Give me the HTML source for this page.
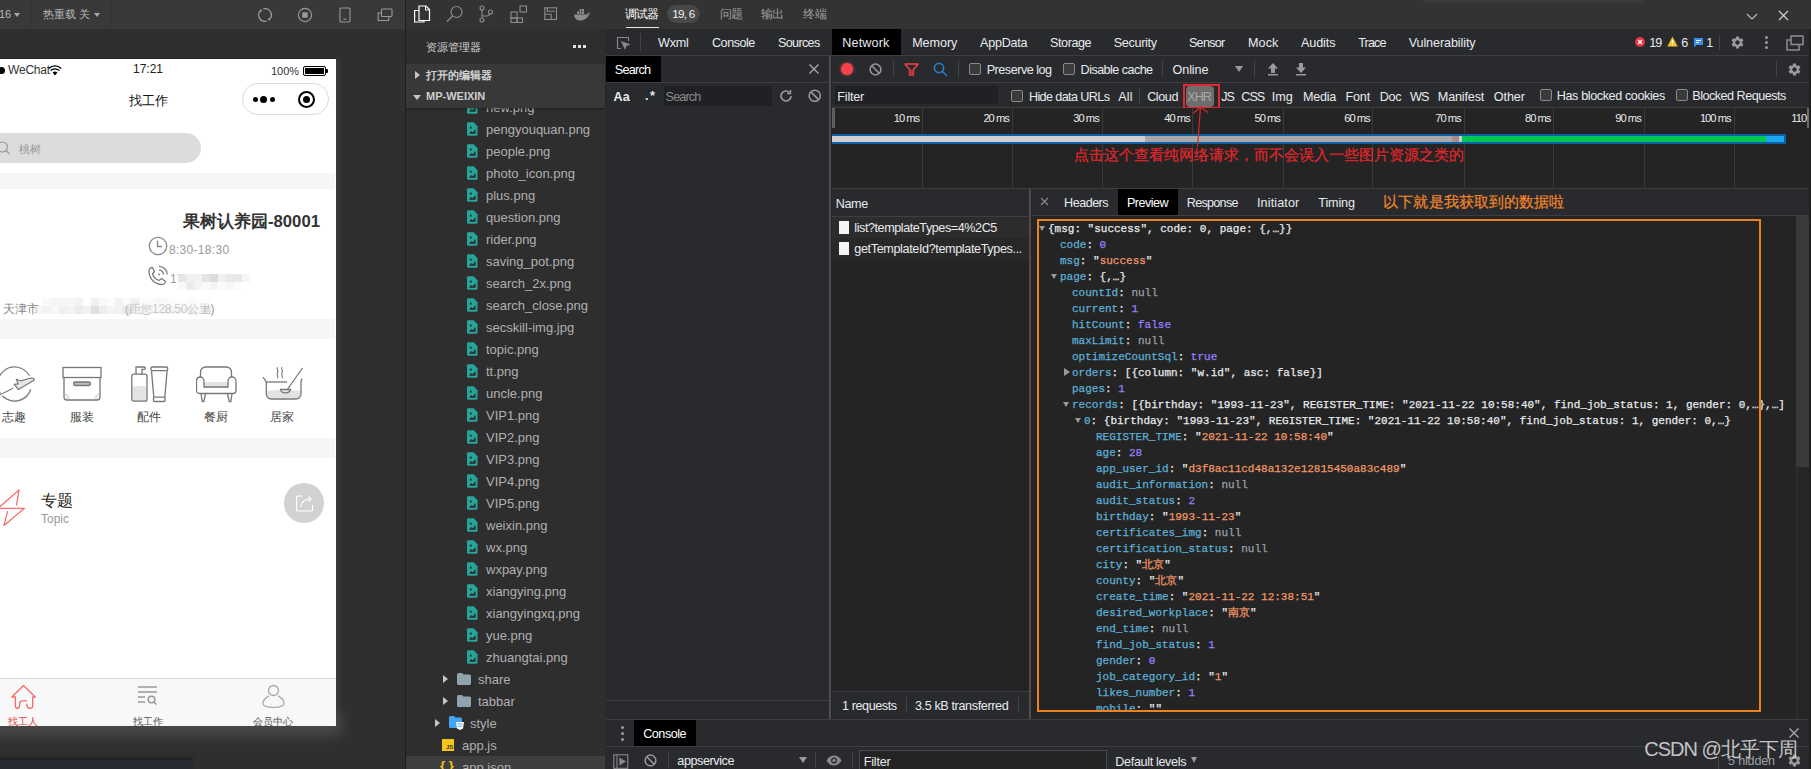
<!DOCTYPE html>
<html><head><meta charset="utf-8">
<style>
*{margin:0;padding:0;box-sizing:border-box}
html,body{width:1811px;height:769px;overflow:hidden;background:#2d2d2d;font-family:"Liberation Sans",sans-serif;font-size:12px;color:#ccc}
.a{position:absolute;white-space:nowrap}
.mono{font-family:"Liberation Mono",monospace}
</style></head><body>
<!-- ========== SIMULATOR ========== -->
<div class="a" style="left:0;top:0;width:405px;height:769px;background:#2f2f2f;overflow:hidden">
  <div class="a" style="left:0;top:0;width:405px;height:29px;background:#393939"></div>
  <div class="a" style="left:31px;top:0;width:1px;height:29px;background:#333"></div>
  <div class="a" style="left:111px;top:0;width:1px;height:29px;background:#333"></div>
  <div class="a" style="left:-1px;top:8px;font-size:11px;color:#b8b8b8;line-height:13px">16</div>
  <div class="a" style="left:14px;top:13px;width:0;height:0;border-left:3px solid transparent;border-right:3px solid transparent;border-top:4px solid #aaa"></div>
  <div class="a" style="left:43px;top:7px;font-size:11.3px;color:#b8b8b8;line-height:14px">热重载 关</div>
  <div class="a" style="left:94px;top:13px;width:0;height:0;border-left:3px solid transparent;border-right:3px solid transparent;border-top:4px solid #aaa"></div>
  <svg class="a" style="left:257px;top:7px" width="16" height="16" viewBox="0 0 16 16" fill="none" stroke="#9a9a9a" stroke-width="1.3"><path d="M6.4 1.9A6.3 6.3 0 0 1 12.05 12.83"/><path d="M9.6 14.1A6.3 6.3 0 0 1 3.95 3.17"/><path d="M10.3 12.2l2.3 1.9.4-3z" fill="#9a9a9a" stroke="none"/><path d="M5.7 3.8l-2.3-1.9-.4 3z" fill="#9a9a9a" stroke="none"/></svg>
  <svg class="a" style="left:297px;top:7px" width="16" height="16" viewBox="0 0 16 16"><circle cx="8" cy="8" r="6.6" fill="none" stroke="#9a9a9a" stroke-width="1.1"/><rect x="5.3" y="5.3" width="5.4" height="5.4" fill="#9a9a9a"/></svg>
  <svg class="a" style="left:339px;top:7px" width="12" height="16" viewBox="0 0 12 16" fill="none" stroke="#9a9a9a" stroke-width="1.1"><rect x="1" y="1" width="10" height="14" rx="1.2"/><path d="M4.5 12.2h3"/></svg>
  <svg class="a" style="left:377px;top:8px" width="16" height="14" viewBox="0 0 16 14" fill="none" stroke="#9a9a9a" stroke-width="1.1"><rect x="4.5" y="1" width="10.5" height="7.5" rx=".8"/><path d="M4.5 5H1.2v7.5h10.5V8.5"/></svg>

  <!-- phone glow -->
  <div class="a" style="left:334px;top:58px;width:6px;height:668px;background:#383838;filter:blur(1px)"></div>
  <div class="a" style="left:-20px;top:712px;width:362px;height:24px;background:#484848;filter:blur(6px)"></div>
  <!-- phone -->
  <div class="a" style="left:0;top:58px;width:336px;height:668px;background:#fff;overflow:hidden">
    <div class="a" style="left:0;top:0;width:336px;height:1px;background:#262626"></div>
    <!-- status bar -->
    <div class="a" style="left:-2px;top:9px;width:7px;height:7px;border-radius:50%;background:#000"></div>
    <div class="a" style="left:8px;top:5px;font-size:12px;color:#333;line-height:15px;letter-spacing:-.2px">WeChat</div>
    <svg class="a" style="left:48px;top:7px" width="14" height="11" viewBox="0 0 14 11"><path d="M7 10.5L4.6 7.6a3.6 3.6 0 0 1 4.8 0z" fill="#000"/><path d="M2.6 5.6a6.4 6.4 0 0 1 8.8 0M0.8 3.4a9 9 0 0 1 12.4 0" fill="none" stroke="#000" stroke-width="1.4"/></svg>
    <div class="a" style="left:133px;top:4px;font-size:12px;color:#222;line-height:15px">17:21</div>
    <div class="a" style="left:271px;top:6px;font-size:11px;color:#333;line-height:14px">100%</div>
    <div class="a" style="left:303px;top:8px;width:23px;height:10px;border:1.5px solid #000;border-radius:2px;padding:1px"><div style="width:100%;height:100%;background:#000"></div></div>
    <div class="a" style="left:326px;top:11px;width:2px;height:4px;background:#000;border-radius:0 1px 1px 0"></div>
    <!-- nav -->
    <div class="a" style="left:128.5px;top:34px;font-size:13px;color:#111;line-height:17px">找工作</div>
    <div class="a" style="left:242px;top:25px;width:87px;height:32px;border:1px solid #dcdcdc;border-radius:16px;background:#fff"></div>
    <div class="a" style="left:253px;top:39px;width:5px;height:5px;border-radius:50%;background:#000"></div>
    <div class="a" style="left:260px;top:38px;width:7px;height:7px;border-radius:50%;background:#000"></div>
    <div class="a" style="left:270px;top:39px;width:5px;height:5px;border-radius:50%;background:#000"></div>
    <div class="a" style="left:298px;top:33px;width:17px;height:17px;border-radius:50%;border:2px solid #000"></div>
    <div class="a" style="left:303px;top:38px;width:7px;height:7px;border-radius:50%;background:#000"></div>
    <!-- search -->
    <div class="a" style="left:-20px;top:75px;width:221px;height:30px;border-radius:15px;background:#dcdcdc"></div>
    <svg class="a" style="left:-3px;top:83px" width="16" height="15" viewBox="0 0 16 15" fill="none" stroke="#999" stroke-width="1.2"><circle cx="5.5" cy="6" r="5"/><path d="M9 9.5l3.5 3.5"/></svg>
    <div class="a" style="left:19px;top:84px;font-size:11px;color:#999;line-height:14px">桃树</div>
    <!-- band -->
    <div class="a" style="left:0;top:115px;width:335px;height:16px;background:#f6f6f6"></div>
    <!-- card -->
    <div class="a" style="left:183px;top:154px;font-size:16.7px;font-weight:bold;color:#333;line-height:20px">果树认养园-80001</div>
    <svg class="a" style="left:148px;top:178px" width="20" height="20" viewBox="0 0 20 20" fill="none" stroke="#888" stroke-width="1.3"><circle cx="10" cy="10" r="8.7"/><path d="M9.5 4.5v6h4.5"/></svg>
    <div class="a" style="left:169px;top:184.5px;font-size:12px;color:#999;line-height:15px;letter-spacing:.3px">8:30-18:30</div>
    <svg class="a" style="left:148px;top:207px" width="21" height="21" viewBox="0 0 21 21" fill="none" stroke="#7a7a7a" stroke-width="1.3" stroke-linejoin="round"><path d="M4.5 2.5C2.5 2.5 1 4 1 6 1 13.5 6.5 19.5 14 19.5c2 0 3.5-1.5 3.5-3L13.5 13.5 11 15.5C8 14.5 5.5 12 4.5 9L6.5 6.5z"/><path d="M11 1.3A8.2 8.2 0 0 1 19.2 9.5"/><path d="M11 5A4.5 4.5 0 0 1 15.5 9.5"/><circle cx="11" cy="9.5" r=".9" fill="#7a7a7a" stroke="none"/></svg>
    <div class="a" style="left:170px;top:214px;font-size:12px;color:#999;line-height:15px">17</div>
    <div class="a" style="left:178px;top:216px;width:8px;height:8px;background:#e6e6e6"></div>
    <div class="a" style="left:186px;top:216px;width:8px;height:8px;background:#f0f0f0"></div>
    <div class="a" style="left:194px;top:216px;width:8px;height:8px;background:#f2f2f2"></div>
    <div class="a" style="left:202px;top:216px;width:8px;height:8px;background:#e4e4e4"></div>
    <div class="a" style="left:210px;top:216px;width:8px;height:8px;background:#dcdcdc"></div>
    <div class="a" style="left:218px;top:216px;width:8px;height:8px;background:#f1f1f1"></div>
    <div class="a" style="left:226px;top:216px;width:8px;height:8px;background:#eaeaea"></div>
    <div class="a" style="left:234px;top:216px;width:8px;height:8px;background:#e8e8e8"></div>
    <div class="a" style="left:242px;top:216px;width:8px;height:8px;background:#f6f6f6"></div>
    <div class="a" style="left:178px;top:224px;width:8px;height:8px;background:#f8f8f8"></div>
    <div class="a" style="left:186px;top:224px;width:8px;height:8px;background:#ececec"></div>
    <div class="a" style="left:194px;top:224px;width:8px;height:8px;background:#f5f5f5"></div>
    <div class="a" style="left:202px;top:224px;width:8px;height:8px;background:#fafafa"></div>
    <div class="a" style="left:210px;top:224px;width:8px;height:8px;background:#f4f4f4"></div>
    <div class="a" style="left:218px;top:224px;width:8px;height:8px;background:#fbfbfb"></div>
    <div class="a" style="left:226px;top:224px;width:8px;height:8px;background:#f7f7f7"></div>
    <div class="a" style="left:234px;top:224px;width:8px;height:8px;background:#fcfcfc"></div>
    <div class="a" style="left:3px;top:244px;font-size:12px;color:#888;line-height:15px">天津市</div>
    <div class="a" style="left:125px;top:244px;font-size:12px;color:#999;line-height:15px;letter-spacing:-.3px">(距您128.50公里)</div>
    <div class="a" style="left:0;top:0;opacity:.55"><div class="a" style="left:43px;top:240px;width:8px;height:8px;background:#f5f5f5"></div>
    <div class="a" style="left:51px;top:240px;width:8px;height:8px;background:#eeeeee"></div>
    <div class="a" style="left:59px;top:240px;width:8px;height:8px;background:#f0f0f0"></div>
    <div class="a" style="left:67px;top:240px;width:8px;height:8px;background:#f2f2f2"></div>
    <div class="a" style="left:75px;top:240px;width:8px;height:8px;background:#e8e8e8"></div>
    <div class="a" style="left:91px;top:240px;width:8px;height:8px;background:#e6e6e6"></div>
    <div class="a" style="left:99px;top:240px;width:8px;height:8px;background:#f4f4f4"></div>
    <div class="a" style="left:107px;top:240px;width:8px;height:8px;background:#fafafa"></div>
    <div class="a" style="left:115px;top:240px;width:8px;height:8px;background:#e9e9e9"></div>
    <div class="a" style="left:123px;top:240px;width:8px;height:8px;background:#f6f6f6"></div>
    <div class="a" style="left:131px;top:240px;width:8px;height:8px;background:#e5e5e5"></div>
    <div class="a" style="left:139px;top:240px;width:8px;height:8px;background:#fbfbfb"></div>
    <div class="a" style="left:147px;top:240px;width:8px;height:8px;background:#f9f9f9"></div>
    <div class="a" style="left:155px;top:240px;width:8px;height:8px;background:#f3f3f3"></div>
    <div class="a" style="left:163px;top:240px;width:8px;height:8px;background:#f7f7f7"></div>
    <div class="a" style="left:171px;top:240px;width:8px;height:8px;background:#fafafa"></div>
    <div class="a" style="left:179px;top:240px;width:8px;height:8px;background:#fcfcfc"></div>
    <div class="a" style="left:187px;top:240px;width:8px;height:8px;background:#f8f8f8"></div>
    <div class="a" style="left:195px;top:240px;width:8px;height:8px;background:#fafafa"></div>
    <div class="a" style="left:203px;top:240px;width:8px;height:8px;background:#fbfbfb"></div>
    <div class="a" style="left:35px;top:248px;width:8px;height:8px;background:#f0f0f0"></div>
    <div class="a" style="left:43px;top:248px;width:8px;height:8px;background:#e8e8e8"></div>
    <div class="a" style="left:51px;top:248px;width:8px;height:8px;background:#f2f2f2"></div>
    <div class="a" style="left:59px;top:248px;width:8px;height:8px;background:#e4e4e4"></div>
    <div class="a" style="left:67px;top:248px;width:8px;height:8px;background:#ececec"></div>
    <div class="a" style="left:75px;top:248px;width:8px;height:8px;background:#dcdcdc"></div>
    <div class="a" style="left:83px;top:248px;width:8px;height:8px;background:#e6e6e6"></div>
    <div class="a" style="left:91px;top:248px;width:8px;height:8px;background:#c8c8c8"></div>
    <div class="a" style="left:99px;top:248px;width:8px;height:8px;background:#e2e2e2"></div>
    <div class="a" style="left:107px;top:248px;width:8px;height:8px;background:#eeeeee"></div>
    <div class="a" style="left:115px;top:248px;width:8px;height:8px;background:#e8e8e8"></div>
    <div class="a" style="left:123px;top:248px;width:8px;height:8px;background:#d4d4d4"></div>
    <div class="a" style="left:131px;top:248px;width:8px;height:8px;background:#e8e8e8"></div>
    <div class="a" style="left:139px;top:248px;width:8px;height:8px;background:#eeeeee"></div>
    <div class="a" style="left:147px;top:248px;width:8px;height:8px;background:#ececec"></div>
    <div class="a" style="left:155px;top:248px;width:8px;height:8px;background:#f2f2f2"></div>
    <div class="a" style="left:163px;top:248px;width:8px;height:8px;background:#eaeaea"></div>
    <div class="a" style="left:171px;top:248px;width:8px;height:8px;background:#ececec"></div>
    <div class="a" style="left:179px;top:248px;width:8px;height:8px;background:#eeeeee"></div>
    <div class="a" style="left:187px;top:248px;width:8px;height:8px;background:#e8e8e8"></div>
    <div class="a" style="left:195px;top:248px;width:8px;height:8px;background:#f0f0f0"></div>
    <div class="a" style="left:203px;top:248px;width:8px;height:8px;background:#d8d8d8"></div></div>
    <!-- band 2 -->
    <div class="a" style="left:0;top:261px;width:335px;height:20px;background:#f6f6f6"></div>
    <!-- categories -->
    <svg class="a" style="left:-2px;top:308px" width="40" height="38" viewBox="0 0 40 38" fill="none" stroke="#777" stroke-width="1.2"><path d="M3 28A17 17 0 0 0 32.7 23.5" stroke="#ccc" stroke-width="2.5" opacity=".35"/><path d="M31.5 9.8A17 17 0 1 0 32.7 23.5"/><path d="M2 29.5L15.5 22.5" stroke="#fff" stroke-width="3"/><path d="M2 28.8L15 22.2"/><path d="M18.3 13.2L22.5 14.8 33 12Q36.5 12.2 36.3 14L20.5 23.6 16.2 18.3 20.2 17.8Z" fill="#e6e6e6" stroke-linejoin="round"/></svg>
    <svg class="a" style="left:62px;top:308px" width="40" height="36" viewBox="0 0 40 36" fill="none" stroke="#777" stroke-width="1.3"><path d="M3 28c2 1 3 3 3.5 5M37 28c-2 1-3 3-3.5 5" stroke="#e3e3e3" stroke-width="3"/><rect x="1" y="1.5" width="38" height="10"/><path d="M2 11.5v19.5a3 3 0 0 0 3 3h30a3 3 0 0 0 3-3V11.5"/><rect x="11.5" y="16" width="17" height="3.5" rx="1.75" fill="#bbb"/></svg>
    <svg class="a" style="left:131px;top:308px" width="38" height="37" viewBox="0 0 38 37" fill="none" stroke="#777" stroke-width="1.3"><path d="M1.4 20.5q7 -1.5 13.8 0V33.5a1.5 1.5 0 0 1-1.5 1.5H2.9a1.5 1.5 0 0 1-1.5-1.5z" fill="#e4e4e4" stroke="none"/><path d="M5 8.2V1h8.2a1.2 1.2 0 0 1 0 2.4H11v4.8"/><rect x=".8" y="8.2" width="15.2" height="27" rx="2"/><rect x="20" y="1" width="16.6" height="3.6" rx="1"/><path d="M20.5 4.6L22.8 31.2M36.1 4.6L33.8 31.2"/><rect x="22.5" y="31.2" width="11.6" height="4.3" rx="1"/></svg>
    <svg class="a" style="left:196px;top:308px" width="41" height="37" viewBox="0 0 41 37" fill="none" stroke="#777" stroke-width="1.3"><path d="M8 16.5q12 -1.5 24 0V21H8z" fill="#e2e2e2" stroke="none"/><path d="M4.5 11V6a5 5 0 0 1 5-5h21a5 5 0 0 1 5 5v5"/><path d="M4 11a4 4 0 0 1 4 4v6h24v-6a4 4 0 0 1 8 0v9.5a3 3 0 0 1-3 3H3.5a3 3 0 0 1-3-3V15A4 4 0 0 1 4 11z"/><path d="M5 27.5l1.2 8h1.6L9.5 27.5M31.5 27.5l1.7 8h1.6l1.2-8"/></svg>
    <svg class="a" style="left:262px;top:308px" width="42" height="37" viewBox="0 0 42 37" fill="none" stroke="#777" stroke-width="1.3"><path d="M4.5 25q17 -2 34 0V28a4.5 4.5 0 0 1-4.5 4.5H9A4.5 4.5 0 0 1 4.5 28z" fill="#e2e2e2" stroke="none"/><path d="M15.5 1.2c-1.5 1.5 1.5 3.5 0 5.5s1.5 3.5 0 5.5M20 1.2c-1.5 1.5 1.5 3.5 0 5.5s1.5 3.5 0 5.5" stroke-width="1.1"/><path d="M1 11l3.3 5V28a5 5 0 0 0 5 5H34a5 5 0 0 0 5-5V15.5l1-3"/><path d="M4.3 16H25"/><path d="M40.5 2L25 24"/><path d="M18.5 23.5h10a5 3.3 0 0 1-10 0z" fill="#e8e8e8"/></svg>
    <div class="a" style="left:2px;top:352px;font-size:12px;color:#444;line-height:14px">志趣</div>
    <div class="a" style="left:70px;top:352px;font-size:12px;color:#444;line-height:14px">服装</div>
    <div class="a" style="left:137px;top:352px;font-size:12px;color:#444;line-height:14px">配件</div>
    <div class="a" style="left:204px;top:352px;font-size:12px;color:#444;line-height:14px">餐厨</div>
    <div class="a" style="left:270px;top:352px;font-size:12px;color:#444;line-height:14px">居家</div>
    <!-- band 3 -->
    <div class="a" style="left:0;top:380px;width:335px;height:20px;background:#f6f6f6"></div>
    <!-- topic -->
    <svg class="a" style="left:-2px;top:430px" width="30" height="40" viewBox="0 0 30 40" fill="none" stroke="#f46e6e" stroke-width="1.3" stroke-linejoin="round" stroke-linecap="round"><path d="M18.5 17L21 2 0 20.3H26.5L6 37.4 9.5 23.6"/></svg>
    <div class="a" style="left:41px;top:433px;font-size:16px;color:#222;line-height:19px">专题</div>
    <div class="a" style="left:41px;top:454px;font-size:12px;color:#999;line-height:15px">Topic</div>
    <div class="a" style="left:284px;top:425px;width:40px;height:40px;border-radius:50%;background:#d2d2d2"></div>
    <svg class="a" style="left:295px;top:435px" width="19" height="19" viewBox="0 0 19 19" fill="none" stroke="#fff" stroke-width="1.2"><path d="M7 3H2.5a1 1 0 0 0-1 1v13a1 1 0 0 0 1 1h14a1 1 0 0 0 1-1v-5"/><path d="M5.5 14c1-5 5-8 10-8"/><path d="M13.5 3.5l2.5 2.5-2.5 2.5"/></svg>
    <!-- tabbar -->
    <div class="a" style="left:0;top:620px;width:336px;height:48px;background:#f8f8f8;border-top:1px solid #d6d6d6"></div>
    <svg class="a" style="left:11px;top:626px" width="26" height="26" viewBox="0 0 26 26" fill="none" stroke="#f26a6a" stroke-width="1.3" stroke-linejoin="round" stroke-linecap="round"><path d="M15.5 16.8H11.6C9.8 16.8 8.6 18 8.6 19.8V21.3C8.6 23.2 7.5 24.3 6.3 24.3S4.4 23.4 4.4 21.8V13H.9L12.5 1.5 24.2 13h-2.5v8.8c0 1.6-.8 2.5-2.4 2.5-2 0-3.6-1.4-3.6-4.1"/></svg>
    <svg class="a" style="left:137px;top:627px" width="21" height="22" viewBox="0 0 21 22" fill="none" stroke="#999" stroke-width="1.6"><path d="M1 2h19M1 7h19M1 12h7M1 17h7"/><circle cx="14.5" cy="14.5" r="3.3"/><path d="M16.8 17l2.5 2.5"/></svg>
    <svg class="a" style="left:261px;top:626px" width="25" height="25" viewBox="0 0 25 25" fill="none" stroke="#aaa" stroke-width="1.3"><circle cx="12.5" cy="6.5" r="5"/><path d="M8 11.8C4.5 13.5 2 16.5 2 19.5c0 2.5 4 3.8 10.5 3.8S23 22 23 19.5c0-3-2.5-6-6-7.7"/></svg>
    <div class="a" style="left:8px;top:657px;font-size:10.3px;color:#e64340;line-height:14px">找工人</div>
    <div class="a" style="left:133px;top:657px;font-size:10.3px;color:#555;line-height:14px">找工作</div>
    <div class="a" style="left:253px;top:657px;font-size:10.3px;color:#555;line-height:14px">会员中心</div>
  </div>
  <!-- shadow below phone -->
  
  <div class="a" style="left:0;top:760px;width:192px;height:9px;background:#262a33;box-shadow:0 -2px 4px rgba(0,0,0,.4)"></div>
</div>
<div class="a" style="left:405px;top:0;width:1px;height:769px;background:#1e1e1e"></div>
<!-- ========== EXPLORER ========== -->
<div class="a" style="left:406px;top:0;width:200px;height:769px;background:#2e2e2e;overflow:hidden">
  <div class="a" style="left:199px;top:29px;width:1px;height:740px;background:#2a2a2a"></div>
  <div class="a" style="left:0;top:0;width:200px;height:29px;background:#333"></div>
  <svg class="a" style="left:7px;top:5px" width="18" height="19" viewBox="0 0 18 19" fill="none" stroke="#fff" stroke-width="1.2"><path d="M6 5.5H1.6v11.5h9.4v-1.5"/><path d="M6 1h7l3.5 3.5v11H6z"/><path d="M12.5 1v4h4" stroke-width="1"/></svg>
  <svg class="a" style="left:40px;top:5px" width="18" height="18" viewBox="0 0 18 18" fill="none" stroke="#8c8c8c" stroke-width="1.2"><circle cx="10.5" cy="7" r="5.5"/><path d="M6.5 11L1 16.5"/></svg>
  <svg class="a" style="left:73px;top:5px" width="15" height="18" viewBox="0 0 15 18" fill="none" stroke="#8c8c8c" stroke-width="1.1"><circle cx="3" cy="3" r="2"/><circle cx="3" cy="15" r="2"/><circle cx="11.5" cy="7" r="2"/><path d="M3 5v8M3 11h5.5l3-2"/></svg>
  <svg class="a" style="left:104px;top:5px" width="18" height="18" viewBox="0 0 18 18" fill="none" stroke="#8c8c8c" stroke-width="1.1"><rect x="1" y="7" width="6" height="6"/><rect x="1" y="13" width="6" height="4.5"/><rect x="7" y="13" width="5.5" height="4.5"/><rect x="10" y="1" width="6.5" height="6"/></svg>
  <svg class="a" style="left:138px;top:7px" width="14" height="14" viewBox="0 0 14 14" fill="none" stroke="#8c8c8c" stroke-width="1.1"><rect x=".8" y=".8" width="11.7" height="11.7"/><path d="M3.3 1v3.2h7.4M1 7.3h6.2v5"/></svg>
  <svg class="a" style="left:167px;top:8px" width="18" height="13" viewBox="0 0 18 13"><path d="M1 6.5h13c1-1.5 2.5-2 3.5-1.5-1 .5-1.5 1.5-2 2.5C14 11 10.5 12.5 7 12.5 3.5 12.5 1.5 10.5 1 6.5z" fill="#8c8c8c"/><rect x="4" y="3.5" width="2" height="2.5" fill="#8c8c8c"/><rect x="6.5" y="3.5" width="2" height="2.5" fill="#8c8c8c"/><rect x="9" y="3.5" width="2" height="2.5" fill="#8c8c8c"/><rect x="6.5" y="1" width="2" height="2.3" fill="#8c8c8c"/><rect x="9" y="1" width="2" height="2.3" fill="#8c8c8c"/></svg>
  <div class="a" style="left:20px;top:39.5px;font-size:11.2px;color:#d0d0d0;line-height:15px">资源管理器</div>
  
  
  

  <svg class="a" style="left:61px;top:100px" width="10.5" height="14" viewBox="0 0 11 14"><path d="M0 1a1 1 0 0 1 1-1h6l4 4v9a1 1 0 0 1-1 1H1a1 1 0 0 1-1-1z" fill="#26a69a"/><path d="M2 12l2.5-3 1.5 1.5L9 7v5z" fill="#2d2d2d"/><circle cx="4" cy="5.5" r="1.2" fill="#2d2d2d"/></svg>
  <div class="a" style="left:80px;top:100px;font-size:13px;color:#b0b0b0;line-height:16px">new.png</div>
  <svg class="a" style="left:61px;top:122px" width="10.5" height="14" viewBox="0 0 11 14"><path d="M0 1a1 1 0 0 1 1-1h6l4 4v9a1 1 0 0 1-1 1H1a1 1 0 0 1-1-1z" fill="#26a69a"/><path d="M2 12l2.5-3 1.5 1.5L9 7v5z" fill="#2d2d2d"/><circle cx="4" cy="5.5" r="1.2" fill="#2d2d2d"/></svg>
  <div class="a" style="left:80px;top:122px;font-size:13px;color:#b0b0b0;line-height:16px">pengyouquan.png</div>
  <svg class="a" style="left:61px;top:144px" width="10.5" height="14" viewBox="0 0 11 14"><path d="M0 1a1 1 0 0 1 1-1h6l4 4v9a1 1 0 0 1-1 1H1a1 1 0 0 1-1-1z" fill="#26a69a"/><path d="M2 12l2.5-3 1.5 1.5L9 7v5z" fill="#2d2d2d"/><circle cx="4" cy="5.5" r="1.2" fill="#2d2d2d"/></svg>
  <div class="a" style="left:80px;top:144px;font-size:13px;color:#b0b0b0;line-height:16px">people.png</div>
  <svg class="a" style="left:61px;top:166px" width="10.5" height="14" viewBox="0 0 11 14"><path d="M0 1a1 1 0 0 1 1-1h6l4 4v9a1 1 0 0 1-1 1H1a1 1 0 0 1-1-1z" fill="#26a69a"/><path d="M2 12l2.5-3 1.5 1.5L9 7v5z" fill="#2d2d2d"/><circle cx="4" cy="5.5" r="1.2" fill="#2d2d2d"/></svg>
  <div class="a" style="left:80px;top:166px;font-size:13px;color:#b0b0b0;line-height:16px">photo_icon.png</div>
  <svg class="a" style="left:61px;top:188px" width="10.5" height="14" viewBox="0 0 11 14"><path d="M0 1a1 1 0 0 1 1-1h6l4 4v9a1 1 0 0 1-1 1H1a1 1 0 0 1-1-1z" fill="#26a69a"/><path d="M2 12l2.5-3 1.5 1.5L9 7v5z" fill="#2d2d2d"/><circle cx="4" cy="5.5" r="1.2" fill="#2d2d2d"/></svg>
  <div class="a" style="left:80px;top:188px;font-size:13px;color:#b0b0b0;line-height:16px">plus.png</div>
  <svg class="a" style="left:61px;top:210px" width="10.5" height="14" viewBox="0 0 11 14"><path d="M0 1a1 1 0 0 1 1-1h6l4 4v9a1 1 0 0 1-1 1H1a1 1 0 0 1-1-1z" fill="#26a69a"/><path d="M2 12l2.5-3 1.5 1.5L9 7v5z" fill="#2d2d2d"/><circle cx="4" cy="5.5" r="1.2" fill="#2d2d2d"/></svg>
  <div class="a" style="left:80px;top:210px;font-size:13px;color:#b0b0b0;line-height:16px">question.png</div>
  <svg class="a" style="left:61px;top:232px" width="10.5" height="14" viewBox="0 0 11 14"><path d="M0 1a1 1 0 0 1 1-1h6l4 4v9a1 1 0 0 1-1 1H1a1 1 0 0 1-1-1z" fill="#26a69a"/><path d="M2 12l2.5-3 1.5 1.5L9 7v5z" fill="#2d2d2d"/><circle cx="4" cy="5.5" r="1.2" fill="#2d2d2d"/></svg>
  <div class="a" style="left:80px;top:232px;font-size:13px;color:#b0b0b0;line-height:16px">rider.png</div>
  <svg class="a" style="left:61px;top:254px" width="10.5" height="14" viewBox="0 0 11 14"><path d="M0 1a1 1 0 0 1 1-1h6l4 4v9a1 1 0 0 1-1 1H1a1 1 0 0 1-1-1z" fill="#26a69a"/><path d="M2 12l2.5-3 1.5 1.5L9 7v5z" fill="#2d2d2d"/><circle cx="4" cy="5.5" r="1.2" fill="#2d2d2d"/></svg>
  <div class="a" style="left:80px;top:254px;font-size:13px;color:#b0b0b0;line-height:16px">saving_pot.png</div>
  <svg class="a" style="left:61px;top:276px" width="10.5" height="14" viewBox="0 0 11 14"><path d="M0 1a1 1 0 0 1 1-1h6l4 4v9a1 1 0 0 1-1 1H1a1 1 0 0 1-1-1z" fill="#26a69a"/><path d="M2 12l2.5-3 1.5 1.5L9 7v5z" fill="#2d2d2d"/><circle cx="4" cy="5.5" r="1.2" fill="#2d2d2d"/></svg>
  <div class="a" style="left:80px;top:276px;font-size:13px;color:#b0b0b0;line-height:16px">search_2x.png</div>
  <svg class="a" style="left:61px;top:298px" width="10.5" height="14" viewBox="0 0 11 14"><path d="M0 1a1 1 0 0 1 1-1h6l4 4v9a1 1 0 0 1-1 1H1a1 1 0 0 1-1-1z" fill="#26a69a"/><path d="M2 12l2.5-3 1.5 1.5L9 7v5z" fill="#2d2d2d"/><circle cx="4" cy="5.5" r="1.2" fill="#2d2d2d"/></svg>
  <div class="a" style="left:80px;top:298px;font-size:13px;color:#b0b0b0;line-height:16px">search_close.png</div>
  <svg class="a" style="left:61px;top:320px" width="10.5" height="14" viewBox="0 0 11 14"><path d="M0 1a1 1 0 0 1 1-1h6l4 4v9a1 1 0 0 1-1 1H1a1 1 0 0 1-1-1z" fill="#26a69a"/><path d="M2 12l2.5-3 1.5 1.5L9 7v5z" fill="#2d2d2d"/><circle cx="4" cy="5.5" r="1.2" fill="#2d2d2d"/></svg>
  <div class="a" style="left:80px;top:320px;font-size:13px;color:#b0b0b0;line-height:16px">secskill-img.jpg</div>
  <svg class="a" style="left:61px;top:342px" width="10.5" height="14" viewBox="0 0 11 14"><path d="M0 1a1 1 0 0 1 1-1h6l4 4v9a1 1 0 0 1-1 1H1a1 1 0 0 1-1-1z" fill="#26a69a"/><path d="M2 12l2.5-3 1.5 1.5L9 7v5z" fill="#2d2d2d"/><circle cx="4" cy="5.5" r="1.2" fill="#2d2d2d"/></svg>
  <div class="a" style="left:80px;top:342px;font-size:13px;color:#b0b0b0;line-height:16px">topic.png</div>
  <svg class="a" style="left:61px;top:364px" width="10.5" height="14" viewBox="0 0 11 14"><path d="M0 1a1 1 0 0 1 1-1h6l4 4v9a1 1 0 0 1-1 1H1a1 1 0 0 1-1-1z" fill="#26a69a"/><path d="M2 12l2.5-3 1.5 1.5L9 7v5z" fill="#2d2d2d"/><circle cx="4" cy="5.5" r="1.2" fill="#2d2d2d"/></svg>
  <div class="a" style="left:80px;top:364px;font-size:13px;color:#b0b0b0;line-height:16px">tt.png</div>
  <svg class="a" style="left:61px;top:386px" width="10.5" height="14" viewBox="0 0 11 14"><path d="M0 1a1 1 0 0 1 1-1h6l4 4v9a1 1 0 0 1-1 1H1a1 1 0 0 1-1-1z" fill="#26a69a"/><path d="M2 12l2.5-3 1.5 1.5L9 7v5z" fill="#2d2d2d"/><circle cx="4" cy="5.5" r="1.2" fill="#2d2d2d"/></svg>
  <div class="a" style="left:80px;top:386px;font-size:13px;color:#b0b0b0;line-height:16px">uncle.png</div>
  <svg class="a" style="left:61px;top:408px" width="10.5" height="14" viewBox="0 0 11 14"><path d="M0 1a1 1 0 0 1 1-1h6l4 4v9a1 1 0 0 1-1 1H1a1 1 0 0 1-1-1z" fill="#26a69a"/><path d="M2 12l2.5-3 1.5 1.5L9 7v5z" fill="#2d2d2d"/><circle cx="4" cy="5.5" r="1.2" fill="#2d2d2d"/></svg>
  <div class="a" style="left:80px;top:408px;font-size:13px;color:#b0b0b0;line-height:16px">VIP1.png</div>
  <svg class="a" style="left:61px;top:430px" width="10.5" height="14" viewBox="0 0 11 14"><path d="M0 1a1 1 0 0 1 1-1h6l4 4v9a1 1 0 0 1-1 1H1a1 1 0 0 1-1-1z" fill="#26a69a"/><path d="M2 12l2.5-3 1.5 1.5L9 7v5z" fill="#2d2d2d"/><circle cx="4" cy="5.5" r="1.2" fill="#2d2d2d"/></svg>
  <div class="a" style="left:80px;top:430px;font-size:13px;color:#b0b0b0;line-height:16px">VIP2.png</div>
  <svg class="a" style="left:61px;top:452px" width="10.5" height="14" viewBox="0 0 11 14"><path d="M0 1a1 1 0 0 1 1-1h6l4 4v9a1 1 0 0 1-1 1H1a1 1 0 0 1-1-1z" fill="#26a69a"/><path d="M2 12l2.5-3 1.5 1.5L9 7v5z" fill="#2d2d2d"/><circle cx="4" cy="5.5" r="1.2" fill="#2d2d2d"/></svg>
  <div class="a" style="left:80px;top:452px;font-size:13px;color:#b0b0b0;line-height:16px">VIP3.png</div>
  <svg class="a" style="left:61px;top:474px" width="10.5" height="14" viewBox="0 0 11 14"><path d="M0 1a1 1 0 0 1 1-1h6l4 4v9a1 1 0 0 1-1 1H1a1 1 0 0 1-1-1z" fill="#26a69a"/><path d="M2 12l2.5-3 1.5 1.5L9 7v5z" fill="#2d2d2d"/><circle cx="4" cy="5.5" r="1.2" fill="#2d2d2d"/></svg>
  <div class="a" style="left:80px;top:474px;font-size:13px;color:#b0b0b0;line-height:16px">VIP4.png</div>
  <svg class="a" style="left:61px;top:496px" width="10.5" height="14" viewBox="0 0 11 14"><path d="M0 1a1 1 0 0 1 1-1h6l4 4v9a1 1 0 0 1-1 1H1a1 1 0 0 1-1-1z" fill="#26a69a"/><path d="M2 12l2.5-3 1.5 1.5L9 7v5z" fill="#2d2d2d"/><circle cx="4" cy="5.5" r="1.2" fill="#2d2d2d"/></svg>
  <div class="a" style="left:80px;top:496px;font-size:13px;color:#b0b0b0;line-height:16px">VIP5.png</div>
  <svg class="a" style="left:61px;top:518px" width="10.5" height="14" viewBox="0 0 11 14"><path d="M0 1a1 1 0 0 1 1-1h6l4 4v9a1 1 0 0 1-1 1H1a1 1 0 0 1-1-1z" fill="#26a69a"/><path d="M2 12l2.5-3 1.5 1.5L9 7v5z" fill="#2d2d2d"/><circle cx="4" cy="5.5" r="1.2" fill="#2d2d2d"/></svg>
  <div class="a" style="left:80px;top:518px;font-size:13px;color:#b0b0b0;line-height:16px">weixin.png</div>
  <svg class="a" style="left:61px;top:540px" width="10.5" height="14" viewBox="0 0 11 14"><path d="M0 1a1 1 0 0 1 1-1h6l4 4v9a1 1 0 0 1-1 1H1a1 1 0 0 1-1-1z" fill="#26a69a"/><path d="M2 12l2.5-3 1.5 1.5L9 7v5z" fill="#2d2d2d"/><circle cx="4" cy="5.5" r="1.2" fill="#2d2d2d"/></svg>
  <div class="a" style="left:80px;top:540px;font-size:13px;color:#b0b0b0;line-height:16px">wx.png</div>
  <svg class="a" style="left:61px;top:562px" width="10.5" height="14" viewBox="0 0 11 14"><path d="M0 1a1 1 0 0 1 1-1h6l4 4v9a1 1 0 0 1-1 1H1a1 1 0 0 1-1-1z" fill="#26a69a"/><path d="M2 12l2.5-3 1.5 1.5L9 7v5z" fill="#2d2d2d"/><circle cx="4" cy="5.5" r="1.2" fill="#2d2d2d"/></svg>
  <div class="a" style="left:80px;top:562px;font-size:13px;color:#b0b0b0;line-height:16px">wxpay.png</div>
  <svg class="a" style="left:61px;top:584px" width="10.5" height="14" viewBox="0 0 11 14"><path d="M0 1a1 1 0 0 1 1-1h6l4 4v9a1 1 0 0 1-1 1H1a1 1 0 0 1-1-1z" fill="#26a69a"/><path d="M2 12l2.5-3 1.5 1.5L9 7v5z" fill="#2d2d2d"/><circle cx="4" cy="5.5" r="1.2" fill="#2d2d2d"/></svg>
  <div class="a" style="left:80px;top:584px;font-size:13px;color:#b0b0b0;line-height:16px">xiangying.png</div>
  <svg class="a" style="left:61px;top:606px" width="10.5" height="14" viewBox="0 0 11 14"><path d="M0 1a1 1 0 0 1 1-1h6l4 4v9a1 1 0 0 1-1 1H1a1 1 0 0 1-1-1z" fill="#26a69a"/><path d="M2 12l2.5-3 1.5 1.5L9 7v5z" fill="#2d2d2d"/><circle cx="4" cy="5.5" r="1.2" fill="#2d2d2d"/></svg>
  <div class="a" style="left:80px;top:606px;font-size:13px;color:#b0b0b0;line-height:16px">xiangyingxq.png</div>
  <svg class="a" style="left:61px;top:628px" width="10.5" height="14" viewBox="0 0 11 14"><path d="M0 1a1 1 0 0 1 1-1h6l4 4v9a1 1 0 0 1-1 1H1a1 1 0 0 1-1-1z" fill="#26a69a"/><path d="M2 12l2.5-3 1.5 1.5L9 7v5z" fill="#2d2d2d"/><circle cx="4" cy="5.5" r="1.2" fill="#2d2d2d"/></svg>
  <div class="a" style="left:80px;top:628px;font-size:13px;color:#b0b0b0;line-height:16px">yue.png</div>
  <svg class="a" style="left:61px;top:650px" width="10.5" height="14" viewBox="0 0 11 14"><path d="M0 1a1 1 0 0 1 1-1h6l4 4v9a1 1 0 0 1-1 1H1a1 1 0 0 1-1-1z" fill="#26a69a"/><path d="M2 12l2.5-3 1.5 1.5L9 7v5z" fill="#2d2d2d"/><circle cx="4" cy="5.5" r="1.2" fill="#2d2d2d"/></svg>
  <div class="a" style="left:80px;top:650px;font-size:13px;color:#b0b0b0;line-height:16px">zhuangtai.png</div>
  <div class="a" style="left:37px;top:675px;width:0;height:0;border-top:4px solid transparent;border-bottom:4px solid transparent;border-left:5px solid #c5c5c5"></div>
  <svg class="a" style="left:51px;top:673px" width="14" height="12" viewBox="0 0 14 12"><path d="M0 1.5A1.5 1.5 0 0 1 1.5 0h3.5l1.5 1.5h6A1.5 1.5 0 0 1 14 3v7.5a1.5 1.5 0 0 1-1.5 1.5h-11A1.5 1.5 0 0 1 0 10.5z" fill="#90a4ae"/></svg>
  <div class="a" style="left:72px;top:672px;font-size:13px;color:#b0b0b0;line-height:16px">share</div>
  <div class="a" style="left:37px;top:697px;width:0;height:0;border-top:4px solid transparent;border-bottom:4px solid transparent;border-left:5px solid #c5c5c5"></div>
  <svg class="a" style="left:51px;top:695px" width="14" height="12" viewBox="0 0 14 12"><path d="M0 1.5A1.5 1.5 0 0 1 1.5 0h3.5l1.5 1.5h6A1.5 1.5 0 0 1 14 3v7.5a1.5 1.5 0 0 1-1.5 1.5h-11A1.5 1.5 0 0 1 0 10.5z" fill="#90a4ae"/></svg>
  <div class="a" style="left:72px;top:694px;font-size:13px;color:#b0b0b0;line-height:16px">tabbar</div>
  <div class="a" style="left:29px;top:719px;width:0;height:0;border-top:4px solid transparent;border-bottom:4px solid transparent;border-left:5px solid #c5c5c5"></div>
  <svg class="a" style="left:43px;top:716px" width="15" height="14" viewBox="0 0 15 14"><path d="M0 1.5A1.5 1.5 0 0 1 1.5 0h3.5l1.5 1.5h5A1.5 1.5 0 0 1 13 3v7.5a1.5 1.5 0 0 1-1.5 1.5h-10A1.5 1.5 0 0 1 0 10.5z" fill="#42a5f5"/><path d="M7 6h8l-1 6.5-3 1.5-3-1.5z" fill="#fff"/><path d="M8.5 8h5M8.7 10.3h4.5" stroke="#42a5f5" stroke-width=".9"/></svg>
  <div class="a" style="left:64px;top:716px;font-size:13px;color:#b0b0b0;line-height:16px">style</div>
  <div class="a" style="left:36px;top:739px;width:12px;height:12px;background:#f5c518"></div>
  <div class="a" style="left:40px;top:744px;font-size:6px;font-weight:bold;color:#333;line-height:6px">JS</div>
  <div class="a" style="left:56px;top:738px;font-size:13px;color:#b0b0b0;line-height:16px">app.js</div>
  <div class="a" style="left:0;top:756px;width:199px;height:22px;background:#3e3e3e"></div>
  <div class="a" style="left:34px;top:758px;font-size:13px;font-weight:bold;color:#f5c518;line-height:16px">{ }</div>
  <div class="a" style="left:56px;top:760px;font-size:13px;color:#b0b0b0;line-height:16px">app.json</div>
  <div class="a" style="left:167px;top:45px;width:2.5px;height:2.5px;background:#e0e0e0"></div><div class="a" style="left:172px;top:45px;width:2.5px;height:2.5px;background:#e0e0e0"></div><div class="a" style="left:177px;top:45px;width:2.5px;height:2.5px;background:#e0e0e0"></div>
  <!-- section headers -->
  <div class="a" style="left:0;top:64px;width:199px;height:44px;background:#383838;box-shadow:0 1px 2px rgba(0,0,0,.35)"></div>
  <div class="a" style="left:9px;top:71px;width:0;height:0;border-top:4px solid transparent;border-bottom:4px solid transparent;border-left:5px solid #c5c5c5"></div>
  <div class="a" style="left:20px;top:67.5px;font-size:11.2px;font-weight:bold;color:#d0d0d0;line-height:15px">打开的编辑器</div>
  <div class="a" style="left:7px;top:95px;width:0;height:0;border-left:4px solid transparent;border-right:4px solid transparent;border-top:5px solid #c5c5c5"></div>
  <div class="a" style="left:20px;top:89px;font-size:11px;font-weight:bold;color:#cfcfcf;line-height:15px">MP-WEIXIN</div>
</div>
<!-- ========== DEVTOOLS ========== -->
<div class="a" style="left:606px;top:0px;width:1205px;height:29px;background:#333;"></div>
<div class="a" style="left:606px;top:29px;width:1205px;height:740px;background:#242424;"></div>
<div class="a" style="left:625.3px;top:7.0px;font-size:12px;line-height:15px;color:#ffffff;font-weight:400;letter-spacing:-1.000px;">调试器</div>
<div class="a" style="left:626px;top:26.5px;width:33px;height:1.5px;background:#e6e6e6;"></div>
<div class="a" style="left:667px;top:5px;width:33px;height:18px;border-radius:9px;background:#484848"></div>
<div class="a" style="left:672.3px;top:7.0px;font-size:11.6px;line-height:14px;color:#f2f2f2;font-weight:400;letter-spacing:-0.699px;">19, 6</div>
<div class="a" style="left:719.8px;top:7.0px;font-size:12px;line-height:15px;color:#a0a0a0;font-weight:400;letter-spacing:-0.800px;">问题</div>
<div class="a" style="left:761.3px;top:7.0px;font-size:12px;line-height:15px;color:#a0a0a0;font-weight:400;letter-spacing:-1.000px;">输出</div>
<div class="a" style="left:803.3px;top:7.0px;font-size:12px;line-height:15px;color:#a0a0a0;font-weight:400;letter-spacing:-0.500px;">终端</div>
<div class="a" style="left:1420px;top:-12px;width:226px;height:15px;border-radius:8px;background:#3b3b3b;filter:blur(1px)"></div>
<svg class="a" style="left:1746px;top:12.5px" width="12" height="8" viewBox="0 0 12 8" fill="none" stroke="#bbb" stroke-width="1.2"><path d="M1 1l5 5 5-5"/></svg>
<svg class="a" style="left:1778px;top:10px" width="11" height="11" viewBox="0 0 11 11" fill="none" stroke="#ccc" stroke-width="1.3"><path d="M1 1l9 9M10 1l-9 9"/></svg>
<div class="a" style="left:606px;top:29px;width:1203px;height:26px;background:#292a2d;"></div>
<div class="a" style="left:606px;top:55px;width:1203px;height:1px;background:#3d3e41;"></div>
<svg class="a" style="left:616px;top:36px" width="14" height="14" viewBox="0 0 14 14" fill="none" stroke="#8a8a8a" stroke-width="1.1"><path d="M5 12.5H1.5v-11h11V5"/><path d="M6 6l7 2.5-3 1-1 3z" fill="#8a8a8a"/></svg>
<div class="a" style="left:640px;top:33px;width:1px;height:18px;background:#444;"></div>
<div class="a" style="left:832px;top:29px;width:69px;height:26px;background:#000;"></div>
<div class="a" style="left:658.1px;top:34.5px;font-size:12.6px;line-height:16px;color:#e8eaed;font-weight:400;letter-spacing:-0.228px;">Wxml</div>
<div class="a" style="left:712.0px;top:34.5px;font-size:12.6px;line-height:16px;color:#e8eaed;font-weight:400;letter-spacing:-0.486px;">Console</div>
<div class="a" style="left:777.9px;top:34.5px;font-size:12.6px;line-height:16px;color:#e8eaed;font-weight:400;letter-spacing:-0.634px;">Sources</div>
<div class="a" style="left:842.3px;top:34.5px;font-size:12.6px;line-height:16px;color:#e8eaed;font-weight:400;letter-spacing:0.135px;">Network</div>
<div class="a" style="left:912.2px;top:34.5px;font-size:12.6px;line-height:16px;color:#e8eaed;font-weight:400;letter-spacing:-0.057px;">Memory</div>
<div class="a" style="left:980.1px;top:34.5px;font-size:12.6px;line-height:16px;color:#e8eaed;font-weight:400;letter-spacing:-0.269px;">AppData</div>
<div class="a" style="left:1050.0px;top:34.5px;font-size:12.6px;line-height:16px;color:#e8eaed;font-weight:400;letter-spacing:-0.418px;">Storage</div>
<div class="a" style="left:1113.8px;top:34.5px;font-size:12.6px;line-height:16px;color:#e8eaed;font-weight:400;letter-spacing:-0.329px;">Security</div>
<div class="a" style="left:1188.9px;top:34.5px;font-size:12.6px;line-height:16px;color:#e8eaed;font-weight:400;letter-spacing:-0.701px;">Sensor</div>
<div class="a" style="left:1248.0px;top:34.5px;font-size:12.6px;line-height:16px;color:#e8eaed;font-weight:400;letter-spacing:0.069px;">Mock</div>
<div class="a" style="left:1301.0px;top:34.5px;font-size:12.6px;line-height:16px;color:#e8eaed;font-weight:400;letter-spacing:-0.103px;">Audits</div>
<div class="a" style="left:1358.2px;top:34.5px;font-size:12.6px;line-height:16px;color:#e8eaed;font-weight:400;letter-spacing:-0.859px;">Trace</div>
<div class="a" style="left:1408.7px;top:34.5px;font-size:12.6px;line-height:16px;color:#e8eaed;font-weight:400;letter-spacing:-0.103px;">Vulnerability</div>
<div class="a" style="left:1635px;top:37px;width:10px;height:10px;border-radius:50%;background:#e8344a"></div>
<svg class="a" style="left:1637px;top:39px" width="6" height="6" viewBox="0 0 6 6" stroke="#fff" stroke-width="1.2"><path d="M1 1l4 4M5 1l-4 4"/></svg>
<div class="a" style="left:1649.3px;top:34.5px;font-size:12.6px;line-height:16px;color:#e8eaed;font-weight:400;letter-spacing:-1.000px;">19</div>
<svg class="a" style="left:1667px;top:36px" width="11" height="11" viewBox="0 0 11 11"><path d="M5.5.5L10.7 10.5H.3z" fill="#f6c02b"/><path d="M5.5 4v3.3" stroke="#fff" stroke-width="1.3"/><circle cx="5.5" cy="8.8" r=".7" fill="#fff"/></svg>
<div class="a" style="left:1681.3px;top:34.5px;font-size:12.6px;line-height:16px;color:#e8eaed;font-weight:400;letter-spacing:0.984px;">6</div>
<svg class="a" style="left:1693px;top:37px" width="11" height="11" viewBox="0 0 11 11"><path d="M1 1h9v7H3.5L1 10.5z" fill="#3b8cf0"/><path d="M3 3.5h5M3 5.5h3" stroke="#fff" stroke-width=".9"/></svg>
<div class="a" style="left:1706.3px;top:34.5px;font-size:12.6px;line-height:16px;color:#e8eaed;font-weight:400;letter-spacing:-1.000px;">1</div>
<div class="a" style="left:1719px;top:35px;width:1px;height:15px;background:#444;"></div>
<svg class="a" style="left:1730px;top:35px" width="15" height="15" viewBox="0 0 24 24"><path fill="#9a9a9a" d="M19.14 12.94c.04-.3.06-.61.06-.94 0-.32-.02-.64-.07-.94l2.03-1.58a.49.49 0 0 0 .12-.61l-1.920-3.32a.488.488 0 0 0-.59-.22l-2.39.96c-.5-.38-1.03-.7-1.62-.94l-.36-2.54a.484.484 0 0 0-.48-.41h-3.84c-.24 0-.43.17-.47.41l-.36 2.54c-.59.24-1.13.57-1.62.94l-2.39-.96c-.22-.08-.47 0-.59.22L2.74 8.87c-.12.21-.08.47.12.61l2.03 1.58c-.05.3-.09.63-.09.94s.02.64.07.94l-2.03 1.58a.49.49 0 0 0-.12.61l1.92 3.32c.12.22.37.29.59.22l2.39-.96c.5.38 1.03.7 1.62.94l.36 2.54c.05.24.24.41.48.41h3.84c.24 0 .44-.17.47-.41l.36-2.540c.59-.24 1.13-.56 1.62-.94l2.39.96c.22.08.47 0 .59-.22l1.92-3.32c.12-.22.07-.47-.12-.61l-2.01-1.58zM12 15.6c-1.98 0-3.6-1.62-3.6-3.6s1.62-3.6 3.6-3.6 3.6 1.62 3.6 3.6-1.62 3.6-3.6 3.6z"/></svg>
<div class="a" style="left:1765px;top:36px;width:3px;height:3px;border-radius:50%;background:#9a9a9a"></div>
<div class="a" style="left:1765px;top:41px;width:3px;height:3px;border-radius:50%;background:#9a9a9a"></div>
<div class="a" style="left:1765px;top:46px;width:3px;height:3px;border-radius:50%;background:#9a9a9a"></div>
<svg class="a" style="left:1786px;top:35px" width="18" height="16" viewBox="0 0 18 16" fill="none" stroke="#8a8a8a" stroke-width="1.6"><rect x="5" y="1" width="12" height="8.5"/><path d="M5 5H1v10h12v-5.5"/></svg>
<div class="a" style="left:606px;top:56px;width:224px;height:26px;background:#292a2d;"></div>
<div class="a" style="left:606px;top:82px;width:224px;height:1px;background:#3d3e41;"></div>
<div class="a" style="left:606px;top:56px;width:55px;height:26px;background:#000;"></div>
<div class="a" style="left:614.8px;top:61.6px;font-size:12.6px;line-height:16px;color:#fff;font-weight:400;letter-spacing:-0.741px;">Search</div>
<svg class="a" style="left:808px;top:63px" width="12" height="12" viewBox="0 0 12 12" fill="none" stroke="#aaa" stroke-width="1.3"><path d="M1.5 1.5l9 9M10.5 1.5l-9 9"/></svg>
<div class="a" style="left:606px;top:83px;width:224px;height:25px;background:#292a2d;"></div>
<div class="a" style="left:606px;top:108px;width:224px;height:1px;background:#3d3e41;"></div>
<div class="a" style="left:613.6px;top:89.0px;font-size:12.6px;line-height:16px;color:#e8eaed;font-weight:700;letter-spacing:0.091px;">Aa</div>
<div class="a" style="left:644.9px;top:88.0px;font-size:12.6px;line-height:16px;color:#e8eaed;font-weight:700;letter-spacing:1.494px;">.*</div>
<div class="a" style="left:664px;top:86px;width:108px;height:20px;background:#202124;"></div>
<div class="a" style="left:665.6px;top:89.3px;font-size:12.6px;line-height:16px;color:#8a8a8a;font-weight:400;letter-spacing:-0.841px;">Search</div>
<svg class="a" style="left:779px;top:89px" width="14" height="14" viewBox="0 0 14 14" fill="none" stroke="#9a9a9a" stroke-width="1.6"><path d="M12 7a5 5 0 1 1-1.5-3.6"/><path d="M11.5 1v3.5H8" stroke-width="1.4"/></svg>
<svg class="a" style="left:808px;top:89px" width="13.5" height="13.5" viewBox="0 0 14 14" fill="none" stroke="#9a9a9a" stroke-width="1.6"><circle cx="7" cy="7" r="5.8"/><path d="M3 3l8 8"/></svg>
<div class="a" style="left:606px;top:108px;width:224px;height:611px;background:#292a2d;"></div>
<div class="a" style="left:606px;top:700px;width:224px;height:1px;background:#3d3e41;"></div>
<div class="a" style="left:829px;top:56px;width:2px;height:663px;background:#4e4e4e;"></div>
<div class="a" style="left:832px;top:56px;width:977px;height:26px;background:#292a2d;"></div>
<div class="a" style="left:832px;top:82px;width:977px;height:1px;background:#3d3e41;"></div>
<div class="a" style="left:841px;top:63px;width:12px;height:12px;border-radius:50%;background:#f4424b;box-shadow:0 0 3px #f4424b"></div>
<svg class="a" style="left:869px;top:63px" width="13" height="13" viewBox="0 0 14 14" fill="none" stroke="#9a9a9a" stroke-width="1.6"><circle cx="7" cy="7" r="5.8"/><path d="M3 3l8 8"/></svg>
<div class="a" style="left:893px;top:61px;width:1px;height:16px;background:#444;"></div>
<svg class="a" style="left:904px;top:63px" width="15" height="13" viewBox="0 0 15 13"><path d="M1 1h13L9.5 6.5V12h-4V6.5z" fill="none" stroke="#f4424b" stroke-width="1.4" stroke-linejoin="round"/><path d="M5.5 6.5h4V12h-4z" fill="#b0343a"/></svg>
<svg class="a" style="left:933px;top:62px" width="15" height="15" viewBox="0 0 15 15" fill="none" stroke="#2a7ac5" stroke-width="1.7"><circle cx="6" cy="6" r="4.6"/><path d="M9.5 9.5l4.5 4.5"/></svg>
<div class="a" style="left:958px;top:61px;width:1px;height:16px;background:#444;"></div>
<div class="a" style="left:969px;top:63px;width:12px;height:12px;border:1px solid #8a8a8a;border-radius:2px;background:#3b3b3b"></div>
<div class="a" style="left:986.7px;top:61.7px;font-size:12.6px;line-height:16px;color:#e8eaed;font-weight:400;letter-spacing:-0.482px;">Preserve log</div>
<div class="a" style="left:1063px;top:63px;width:12px;height:12px;border:1px solid #8a8a8a;border-radius:2px;background:#3b3b3b"></div>
<div class="a" style="left:1080.6px;top:61.7px;font-size:12.6px;line-height:16px;color:#e8eaed;font-weight:400;letter-spacing:-0.551px;">Disable cache</div>
<div class="a" style="left:1162px;top:61px;width:1px;height:16px;background:#444;"></div>
<div class="a" style="left:1172.6px;top:61.7px;font-size:12.6px;line-height:16px;color:#e8eaed;font-weight:400;letter-spacing:-0.121px;">Online</div>
<div class="a" style="left:1235px;top:66px;width:0;height:0;border-left:4.0px solid transparent;border-right:4.0px solid transparent;border-top:6.5px solid #999"></div>
<div class="a" style="left:1254px;top:61px;width:1px;height:16px;background:#444;"></div>
<svg class="a" style="left:1267px;top:63px" width="12" height="13" viewBox="0 0 12 13" fill="#9a9a9a"><path d="M6 0L11 5.5H8V10H4V5.5H1z"/><rect x="1" y="11" width="10" height="1.5"/></svg>
<svg class="a" style="left:1295px;top:63px" width="12" height="13" viewBox="0 0 12 13" fill="#9a9a9a"><path d="M4 0h4v4.5h3L6 10 1 4.5h3z"/><rect x="1" y="11" width="10" height="1.5"/></svg>
<div class="a" style="left:1776px;top:61px;width:1px;height:16px;background:#444;"></div>
<svg class="a" style="left:1787px;top:62px" width="15" height="15" viewBox="0 0 24 24"><path fill="#9a9a9a" d="M19.14 12.94c.04-.3.06-.61.06-.94 0-.32-.02-.64-.07-.94l2.03-1.58a.49.49 0 0 0 .12-.61l-1.920-3.32a.488.488 0 0 0-.59-.22l-2.39.96c-.5-.38-1.03-.7-1.62-.94l-.36-2.54a.484.484 0 0 0-.48-.41h-3.84c-.24 0-.43.17-.47.41l-.36 2.54c-.59.24-1.13.57-1.62.94l-2.39-.96c-.22-.08-.47 0-.59.22L2.74 8.87c-.12.21-.08.47.12.61l2.03 1.58c-.05.3-.09.63-.09.94s.02.64.07.94l-2.03 1.58a.49.49 0 0 0-.12.61l1.92 3.32c.12.22.37.29.59.22l2.39-.96c.5.38 1.03.7 1.62.94l.36 2.54c.05.24.24.41.48.41h3.84c.24 0 .44-.17.47-.41l.36-2.540c.59-.24 1.13-.56 1.62-.94l2.39.96c.22.08.47 0 .59-.22l1.92-3.32c.12-.22.07-.47-.12-.61l-2.01-1.58zM12 15.6c-1.98 0-3.6-1.62-3.6-3.6s1.62-3.6 3.6-3.6 3.6 1.62 3.6 3.6-1.62 3.6-3.6 3.6z"/></svg>
<div class="a" style="left:832px;top:83px;width:977px;height:25px;background:#292a2d;"></div>
<div class="a" style="left:832px;top:107px;width:977px;height:1px;background:#3d3e41;"></div>
<div class="a" style="left:835px;top:86px;width:163px;height:18px;background:#202124;"></div>
<div class="a" style="left:837.3px;top:88.5px;font-size:12.6px;line-height:16px;color:#e8eaed;font-weight:400;letter-spacing:-0.200px;">Filter</div>
<div class="a" style="left:1011px;top:90px;width:12px;height:12px;border:1px solid #8a8a8a;border-radius:2px;background:#3b3b3b"></div>
<div class="a" style="left:1028.9px;top:88.7px;font-size:12.6px;line-height:16px;color:#e8eaed;font-weight:400;letter-spacing:-0.600px;">Hide data URLs</div>
<div class="a" style="left:1118.3px;top:88.7px;font-size:12.6px;line-height:16px;color:#e8eaed;font-weight:400;letter-spacing:0.100px;">All</div>
<div class="a" style="left:1139px;top:88px;width:1px;height:16px;background:#444;"></div>
<div class="a" style="left:1147.2px;top:88.7px;font-size:12.6px;line-height:16px;color:#e8eaed;font-weight:400;letter-spacing:-0.427px;">Cloud</div>
<div class="a" style="left:1186px;top:86px;width:28px;height:21px;border-radius:4px;background:#6e6e6e"></div>
<div class="a" style="left:1187.3px;top:88.7px;font-size:12.6px;line-height:16px;color:#a8a8a8;font-weight:400;letter-spacing:-1.000px;">XHR</div>
<div class="a" style="left:1221.3px;top:88.7px;font-size:12.6px;line-height:16px;color:#e8eaed;font-weight:400;letter-spacing:-1.000px;">JS</div>
<div class="a" style="left:1241.3px;top:88.7px;font-size:12.6px;line-height:16px;color:#e8eaed;font-weight:400;letter-spacing:-1.000px;">CSS</div>
<div class="a" style="left:1271.8px;top:88.7px;font-size:12.6px;line-height:16px;color:#e8eaed;font-weight:400;letter-spacing:-0.050px;">Img</div>
<div class="a" style="left:1302.9px;top:88.7px;font-size:12.6px;line-height:16px;color:#e8eaed;font-weight:400;letter-spacing:-0.253px;">Media</div>
<div class="a" style="left:1345.5px;top:88.7px;font-size:12.6px;line-height:16px;color:#e8eaed;font-weight:400;letter-spacing:-0.168px;">Font</div>
<div class="a" style="left:1379.7px;top:88.7px;font-size:12.6px;line-height:16px;color:#e8eaed;font-weight:400;letter-spacing:-0.303px;">Doc</div>
<div class="a" style="left:1410.1px;top:88.7px;font-size:12.6px;line-height:16px;color:#e8eaed;font-weight:400;letter-spacing:-1.000px;">WS</div>
<div class="a" style="left:1437.8px;top:88.7px;font-size:12.6px;line-height:16px;color:#e8eaed;font-weight:400;letter-spacing:-0.158px;">Manifest</div>
<div class="a" style="left:1493.8px;top:88.7px;font-size:12.6px;line-height:16px;color:#e8eaed;font-weight:400;letter-spacing:-0.075px;">Other</div>
<div class="a" style="left:1540px;top:89px;width:12px;height:12px;border:1px solid #8a8a8a;border-radius:2px;background:#3b3b3b"></div>
<div class="a" style="left:1556.8px;top:88.2px;font-size:12.6px;line-height:16px;color:#e8eaed;font-weight:400;letter-spacing:-0.390px;">Has blocked cookies</div>
<div class="a" style="left:1676px;top:89px;width:12px;height:12px;border:1px solid #8a8a8a;border-radius:2px;background:#3b3b3b"></div>
<div class="a" style="left:1692.3px;top:88.2px;font-size:12.6px;line-height:16px;color:#e8eaed;font-weight:400;letter-spacing:-0.501px;">Blocked Requests</div>
<div class="a" style="left:1183px;top:84px;width:37px;height:25px;border:2px solid #e8262d"></div>
<div class="a" style="left:832px;top:108px;width:977px;height:80px;background:#242424;"></div>
<div class="a" style="left:832px;top:188px;width:977px;height:1px;background:#3d3e41;"></div>
<div class="a" style="left:832px;top:108px;width:3px;height:20px;background:#5e5e5e;"></div>
<div class="a" style="left:1807px;top:108px;width:3px;height:20px;background:#6a6a6a;"></div>
<div class="a" style="left:922px;top:108px;width:1px;height:80px;background:#3a3a3a;"></div>
<div class="a" style="left:893.7px;top:111.3px;font-size:11.2px;line-height:14px;color:#e8eaed;font-weight:400;letter-spacing:-1.000px;">10 ms</div>
<div class="a" style="left:1012px;top:108px;width:1px;height:80px;background:#3a3a3a;"></div>
<div class="a" style="left:983.4px;top:111.3px;font-size:11.2px;line-height:14px;color:#e8eaed;font-weight:400;letter-spacing:-1.000px;">20 ms</div>
<div class="a" style="left:1102px;top:108px;width:1px;height:80px;background:#3a3a3a;"></div>
<div class="a" style="left:1073.3px;top:111.3px;font-size:11.2px;line-height:14px;color:#e8eaed;font-weight:400;letter-spacing:-1.000px;">30 ms</div>
<div class="a" style="left:1192px;top:108px;width:1px;height:80px;background:#3a3a3a;"></div>
<div class="a" style="left:1164.2px;top:111.3px;font-size:11.2px;line-height:14px;color:#e8eaed;font-weight:400;letter-spacing:-1.000px;">40 ms</div>
<div class="a" style="left:1283px;top:108px;width:1px;height:80px;background:#3a3a3a;"></div>
<div class="a" style="left:1254.5px;top:111.3px;font-size:11.2px;line-height:14px;color:#e8eaed;font-weight:400;letter-spacing:-1.000px;">50 ms</div>
<div class="a" style="left:1372px;top:108px;width:1px;height:80px;background:#3a3a3a;"></div>
<div class="a" style="left:1344.2px;top:111.3px;font-size:11.2px;line-height:14px;color:#e8eaed;font-weight:400;letter-spacing:-1.000px;">60 ms</div>
<div class="a" style="left:1464px;top:108px;width:1px;height:80px;background:#3a3a3a;"></div>
<div class="a" style="left:1435.2px;top:111.3px;font-size:11.2px;line-height:14px;color:#e8eaed;font-weight:400;letter-spacing:-1.000px;">70 ms</div>
<div class="a" style="left:1553px;top:108px;width:1px;height:80px;background:#3a3a3a;"></div>
<div class="a" style="left:1525.0px;top:111.3px;font-size:11.2px;line-height:14px;color:#e8eaed;font-weight:400;letter-spacing:-1.000px;">80 ms</div>
<div class="a" style="left:1644px;top:108px;width:1px;height:80px;background:#3a3a3a;"></div>
<div class="a" style="left:1615.3px;top:111.3px;font-size:11.2px;line-height:14px;color:#e8eaed;font-weight:400;letter-spacing:-1.000px;">90 ms</div>
<div class="a" style="left:1734px;top:108px;width:1px;height:80px;background:#3a3a3a;"></div>
<div class="a" style="left:1699.9px;top:111.3px;font-size:11.2px;line-height:14px;color:#e8eaed;font-weight:400;letter-spacing:-1.000px;">100 ms</div>
<div class="a" style="left:1791.3px;top:111.3px;font-size:11.2px;line-height:14px;color:#e8eaed;font-weight:400;letter-spacing:-0.922px;">110</div>
<div class="a" style="left:832px;top:134px;width:954px;height:10px;background:#0f5fa5;"></div>
<div class="a" style="left:832px;top:136px;width:313px;height:6px;background:#cfcfcf;"></div>
<div class="a" style="left:1145px;top:136px;width:307px;height:6px;background:#a9a9a9;"></div>
<div class="a" style="left:1452px;top:136px;width:7px;height:6px;background:#a88e84;"></div>
<div class="a" style="left:1459px;top:136px;width:3px;height:6px;background:#c5ccd3;"></div>
<div class="a" style="left:1462px;top:136px;width:304px;height:6px;background:#00c853;"></div>
<div class="a" style="left:1766px;top:136px;width:18px;height:6px;background:#1ea8f0;"></div>
<div class="a" style="left:1074.3px;top:144.5px;font-size:15px;line-height:19px;color:#e3262c;font-weight:400;letter-spacing:0.000px;-webkit-text-stroke:.2px #e3262c">点击这个查看纯网络请求，而不会误入一些图片资源之类的</div>
<svg class="a" style="left:1188px;top:100px" width="24" height="52" viewBox="0 0 24 52" fill="none" stroke="#d9262c" stroke-width="1.2"><path d="M12.5 7L9.5 47"/><path d="M5 13.5L12.5 7l7.5 5.5"/></svg>
<div class="a" style="left:832px;top:189px;width:198px;height:27px;background:#292a2d;"></div>
<div class="a" style="left:832px;top:216px;width:198px;height:1px;background:#3d3e41;"></div>
<div class="a" style="left:835.7px;top:195.5px;font-size:12.6px;line-height:16px;color:#e8eaed;font-weight:400;letter-spacing:-0.331px;">Name</div>
<div class="a" style="left:832px;top:217px;width:198px;height:21px;background:#2c2c2c;"></div>
<div class="a" style="left:832px;top:238px;width:198px;height:21px;background:#282828;"></div>
<div class="a" style="left:839px;top:221px;width:10px;height:13px;background:#f4f4f4;"></div>
<div class="a" style="left:854.3px;top:220.0px;font-size:12.6px;line-height:16px;color:#e8eaed;font-weight:400;letter-spacing:-0.433px;">list?templateTypes=4%2C5</div>
<div class="a" style="left:839px;top:242px;width:10px;height:13px;background:#f4f4f4;"></div>
<div class="a" style="left:854.3px;top:241.0px;font-size:12.6px;line-height:16px;color:#e8eaed;font-weight:400;letter-spacing:-0.363px;">getTemplateId?templateTypes...</div>
<div class="a" style="left:832px;top:691px;width:198px;height:1px;background:#3d3e41;"></div>
<div class="a" style="left:832px;top:692px;width:198px;height:27px;background:#292a2d;"></div>
<div class="a" style="left:842.0px;top:697.5px;font-size:12.6px;line-height:16px;color:#e8eaed;font-weight:400;letter-spacing:-0.413px;">1 requests</div>
<div class="a" style="left:906px;top:697px;width:1px;height:16px;background:#444;"></div>
<div class="a" style="left:914.9px;top:697.5px;font-size:12.6px;line-height:16px;color:#e8eaed;font-weight:400;letter-spacing:-0.371px;">3.5 kB transferred</div>
<div class="a" style="left:1018px;top:697px;width:1px;height:16px;background:#444;"></div>
<div class="a" style="left:1029px;top:189px;width:2px;height:530px;background:#4e4e4e;"></div>
<div class="a" style="left:1032px;top:189px;width:777px;height:26px;background:#292a2d;"></div>
<div class="a" style="left:1032px;top:215px;width:777px;height:1px;background:#3d3e41;"></div>
<svg class="a" style="left:1040px;top:197px" width="9" height="9" viewBox="0 0 9 9" fill="none" stroke="#8a8a8a" stroke-width="1.1"><path d="M1 1l7 7M8 1l-7 7"/></svg>
<div class="a" style="left:1064.1px;top:194.6px;font-size:12.6px;line-height:16px;color:#e8eaed;font-weight:400;letter-spacing:-0.518px;">Headers</div>
<div class="a" style="left:1118px;top:189px;width:60px;height:26px;background:#000;"></div>
<div class="a" style="left:1126.9px;top:194.6px;font-size:12.6px;line-height:16px;color:#fff;font-weight:400;letter-spacing:-0.533px;">Preview</div>
<div class="a" style="left:1186.8px;top:194.6px;font-size:12.6px;line-height:16px;color:#e8eaed;font-weight:400;letter-spacing:-0.717px;">Response</div>
<div class="a" style="left:1257.0px;top:194.6px;font-size:12.6px;line-height:16px;color:#e8eaed;font-weight:400;letter-spacing:0.123px;">Initiator</div>
<div class="a" style="left:1318.3px;top:194.6px;font-size:12.6px;line-height:16px;color:#e8eaed;font-weight:400;letter-spacing:-0.126px;">Timing</div>
<div class="a" style="left:1383.3px;top:192.0px;font-size:15px;line-height:19px;color:#f0862a;font-weight:400;letter-spacing:0.091px;-webkit-text-stroke:.2px #f0862a">以下就是我获取到的数据啦</div>
<div class="a" style="left:1796px;top:216px;width:13px;height:503px;background:#262626;"></div>
<div class="a" style="left:1796px;top:216px;width:1px;height:503px;background:#303030;"></div>
<div class="a" style="left:1796px;top:216px;width:13px;height:251px;background:#3a3a3a;border-radius:3px 3px 0 0"></div>
<div class="a" style="left:1809px;top:29px;width:2px;height:740px;background:#1f1f1f;"></div>
<div class="a" style="left:1032px;top:216px;width:765px;height:494px;overflow:hidden">
<div class="a" style="left:6.5px;top:10px;width:0;height:0;border-left:3.5px solid transparent;border-right:3.5px solid transparent;border-top:5.5px solid #9a9a9a"></div>
<div class="a mono" style="left:16px;top:5px;font-size:11px;line-height:16px;-webkit-text-stroke:.25px currentColor"><span style="color:#e8eaed">{msg: "success", code: 0, page: {,…}}</span></div>
<div class="a mono" style="left:28px;top:21px;font-size:11px;line-height:16px;-webkit-text-stroke:.25px currentColor"><span style="color:#5db0d7">code</span><span style="color:#e8eaed">: </span><span style="color:#9980ff">0</span></div>
<div class="a mono" style="left:28px;top:37px;font-size:11px;line-height:16px;-webkit-text-stroke:.25px currentColor"><span style="color:#5db0d7">msg</span><span style="color:#e8eaed">: "</span><span style="color:#f29766">success</span><span style="color:#e8eaed">"</span></div>
<div class="a" style="left:18.5px;top:58px;width:0;height:0;border-left:3.5px solid transparent;border-right:3.5px solid transparent;border-top:5.5px solid #9a9a9a"></div>
<div class="a mono" style="left:28px;top:53px;font-size:11px;line-height:16px;-webkit-text-stroke:.25px currentColor"><span style="color:#5db0d7">page</span><span style="color:#e8eaed">: {,…}</span></div>
<div class="a mono" style="left:40px;top:69px;font-size:11px;line-height:16px;-webkit-text-stroke:.25px currentColor"><span style="color:#5db0d7">countId</span><span style="color:#e8eaed">: </span><span style="color:#9aa0a6">null</span></div>
<div class="a mono" style="left:40px;top:85px;font-size:11px;line-height:16px;-webkit-text-stroke:.25px currentColor"><span style="color:#5db0d7">current</span><span style="color:#e8eaed">: </span><span style="color:#9980ff">1</span></div>
<div class="a mono" style="left:40px;top:101px;font-size:11px;line-height:16px;-webkit-text-stroke:.25px currentColor"><span style="color:#5db0d7">hitCount</span><span style="color:#e8eaed">: </span><span style="color:#9980ff">false</span></div>
<div class="a mono" style="left:40px;top:117px;font-size:11px;line-height:16px;-webkit-text-stroke:.25px currentColor"><span style="color:#5db0d7">maxLimit</span><span style="color:#e8eaed">: </span><span style="color:#9aa0a6">null</span></div>
<div class="a mono" style="left:40px;top:133px;font-size:11px;line-height:16px;-webkit-text-stroke:.25px currentColor"><span style="color:#5db0d7">optimizeCountSql</span><span style="color:#e8eaed">: </span><span style="color:#9980ff">true</span></div>
<div class="a" style="left:32px;top:152px;width:0;height:0;border-top:4px solid transparent;border-bottom:4px solid transparent;border-left:6px solid #9a9a9a"></div>
<div class="a mono" style="left:40px;top:149px;font-size:11px;line-height:16px;-webkit-text-stroke:.25px currentColor"><span style="color:#5db0d7">orders</span><span style="color:#e8eaed">: [{column: "w.id", asc: false}]</span></div>
<div class="a mono" style="left:40px;top:165px;font-size:11px;line-height:16px;-webkit-text-stroke:.25px currentColor"><span style="color:#5db0d7">pages</span><span style="color:#e8eaed">: </span><span style="color:#9980ff">1</span></div>
<div class="a" style="left:30.5px;top:186px;width:0;height:0;border-left:3.5px solid transparent;border-right:3.5px solid transparent;border-top:5.5px solid #9a9a9a"></div>
<div class="a mono" style="left:40px;top:181px;font-size:11px;line-height:16px;-webkit-text-stroke:.25px currentColor"><span style="color:#5db0d7">records</span><span style="color:#e8eaed">: [{birthday: "1993-11-23", REGISTER_TIME: "2021-11-22 10:58:40", find_job_status: 1, gender: 0,…},…]</span></div>
<div class="a" style="left:42.5px;top:202px;width:0;height:0;border-left:3.5px solid transparent;border-right:3.5px solid transparent;border-top:5.5px solid #9a9a9a"></div>
<div class="a mono" style="left:52px;top:197px;font-size:11px;line-height:16px;-webkit-text-stroke:.25px currentColor"><span style="color:#5db0d7">0</span><span style="color:#e8eaed">: {birthday: "1993-11-23", REGISTER_TIME: "2021-11-22 10:58:40", find_job_status: 1, gender: 0,…}</span></div>
<div class="a mono" style="left:64px;top:213px;font-size:11px;line-height:16px;-webkit-text-stroke:.25px currentColor"><span style="color:#5db0d7">REGISTER_TIME</span><span style="color:#e8eaed">: "</span><span style="color:#f29766">2021-11-22 10:58:40</span><span style="color:#e8eaed">"</span></div>
<div class="a mono" style="left:64px;top:229px;font-size:11px;line-height:16px;-webkit-text-stroke:.25px currentColor"><span style="color:#5db0d7">age</span><span style="color:#e8eaed">: </span><span style="color:#9980ff">28</span></div>
<div class="a mono" style="left:64px;top:245px;font-size:11px;line-height:16px;-webkit-text-stroke:.25px currentColor"><span style="color:#5db0d7">app_user_id</span><span style="color:#e8eaed">: "</span><span style="color:#f29766">d3f8ac11cd48a132e12815450a83c489</span><span style="color:#e8eaed">"</span></div>
<div class="a mono" style="left:64px;top:261px;font-size:11px;line-height:16px;-webkit-text-stroke:.25px currentColor"><span style="color:#5db0d7">audit_information</span><span style="color:#e8eaed">: </span><span style="color:#9aa0a6">null</span></div>
<div class="a mono" style="left:64px;top:277px;font-size:11px;line-height:16px;-webkit-text-stroke:.25px currentColor"><span style="color:#5db0d7">audit_status</span><span style="color:#e8eaed">: </span><span style="color:#9980ff">2</span></div>
<div class="a mono" style="left:64px;top:293px;font-size:11px;line-height:16px;-webkit-text-stroke:.25px currentColor"><span style="color:#5db0d7">birthday</span><span style="color:#e8eaed">: "</span><span style="color:#f29766">1993-11-23</span><span style="color:#e8eaed">"</span></div>
<div class="a mono" style="left:64px;top:309px;font-size:11px;line-height:16px;-webkit-text-stroke:.25px currentColor"><span style="color:#5db0d7">certificates_img</span><span style="color:#e8eaed">: </span><span style="color:#9aa0a6">null</span></div>
<div class="a mono" style="left:64px;top:325px;font-size:11px;line-height:16px;-webkit-text-stroke:.25px currentColor"><span style="color:#5db0d7">certification_status</span><span style="color:#e8eaed">: </span><span style="color:#9aa0a6">null</span></div>
<div class="a mono" style="left:64px;top:341px;font-size:11px;line-height:16px;-webkit-text-stroke:.25px currentColor"><span style="color:#5db0d7">city</span><span style="color:#e8eaed">: "</span><span style="color:#f29766">北京</span><span style="color:#e8eaed">"</span></div>
<div class="a mono" style="left:64px;top:357px;font-size:11px;line-height:16px;-webkit-text-stroke:.25px currentColor"><span style="color:#5db0d7">county</span><span style="color:#e8eaed">: "</span><span style="color:#f29766">北京</span><span style="color:#e8eaed">"</span></div>
<div class="a mono" style="left:64px;top:373px;font-size:11px;line-height:16px;-webkit-text-stroke:.25px currentColor"><span style="color:#5db0d7">create_time</span><span style="color:#e8eaed">: "</span><span style="color:#f29766">2021-11-22 12:38:51</span><span style="color:#e8eaed">"</span></div>
<div class="a mono" style="left:64px;top:389px;font-size:11px;line-height:16px;-webkit-text-stroke:.25px currentColor"><span style="color:#5db0d7">desired_workplace</span><span style="color:#e8eaed">: "</span><span style="color:#f29766">南京</span><span style="color:#e8eaed">"</span></div>
<div class="a mono" style="left:64px;top:405px;font-size:11px;line-height:16px;-webkit-text-stroke:.25px currentColor"><span style="color:#5db0d7">end_time</span><span style="color:#e8eaed">: </span><span style="color:#9aa0a6">null</span></div>
<div class="a mono" style="left:64px;top:421px;font-size:11px;line-height:16px;-webkit-text-stroke:.25px currentColor"><span style="color:#5db0d7">find_job_status</span><span style="color:#e8eaed">: </span><span style="color:#9980ff">1</span></div>
<div class="a mono" style="left:64px;top:437px;font-size:11px;line-height:16px;-webkit-text-stroke:.25px currentColor"><span style="color:#5db0d7">gender</span><span style="color:#e8eaed">: </span><span style="color:#9980ff">0</span></div>
<div class="a mono" style="left:64px;top:453px;font-size:11px;line-height:16px;-webkit-text-stroke:.25px currentColor"><span style="color:#5db0d7">job_category_id</span><span style="color:#e8eaed">: "</span><span style="color:#f29766">1</span><span style="color:#e8eaed">"</span></div>
<div class="a mono" style="left:64px;top:469px;font-size:11px;line-height:16px;-webkit-text-stroke:.25px currentColor"><span style="color:#5db0d7">likes_number</span><span style="color:#e8eaed">: </span><span style="color:#9980ff">1</span></div>
<div class="a mono" style="left:64px;top:485px;font-size:11px;line-height:16px;-webkit-text-stroke:.25px currentColor"><span style="color:#5db0d7">mobile</span><span style="color:#e8eaed">: ""</span></div>
</div>
<div class="a" style="left:1037px;top:219px;width:724px;height:493px;border:2px solid #f0821e"></div>
<div class="a" style="left:606px;top:719px;width:1203px;height:1px;background:#3d3e41;"></div>
<div class="a" style="left:606px;top:720px;width:1203px;height:26px;background:#292a2d;"></div>
<div class="a" style="left:606px;top:746px;width:1203px;height:1px;background:#3d3e41;"></div>
<div class="a" style="left:621px;top:726px;width:3px;height:3px;border-radius:50%;background:#9a9a9a"></div>
<div class="a" style="left:621px;top:732px;width:3px;height:3px;border-radius:50%;background:#9a9a9a"></div>
<div class="a" style="left:621px;top:738px;width:3px;height:3px;border-radius:50%;background:#9a9a9a"></div>
<div class="a" style="left:634px;top:720px;width:62px;height:26px;background:#000;"></div>
<div class="a" style="left:643.2px;top:725.5px;font-size:12.6px;line-height:16px;color:#fff;font-weight:400;letter-spacing:-0.470px;">Console</div>
<svg class="a" style="left:1788px;top:727px" width="12" height="12" viewBox="0 0 12 12" fill="none" stroke="#aaa" stroke-width="1.3"><path d="M1.5 1.5l9 9M10.5 1.5l-9 9"/></svg>
<div class="a" style="left:606px;top:747px;width:1203px;height:22px;background:#292a2d;"></div>
<svg class="a" style="left:613px;top:754px" width="16" height="15" viewBox="0 0 16 15" fill="none" stroke="#8a8a8a" stroke-width="1.1"><rect x=".8" y=".8" width="14" height="13.5"/><path d="M4 1v13"/><path d="M7 4.5l5 3-5 3z" fill="#8a8a8a"/></svg>
<svg class="a" style="left:644px;top:754px" width="13" height="13" viewBox="0 0 14 14" fill="none" stroke="#9a9a9a" stroke-width="1.6"><circle cx="7" cy="7" r="5.8"/><path d="M3 3l8 8"/></svg>
<div class="a" style="left:668px;top:752px;width:1px;height:16px;background:#444;"></div>
<div class="a" style="left:677.3px;top:753.0px;font-size:12.6px;line-height:16px;color:#e8eaed;font-weight:400;letter-spacing:-0.412px;">appservice</div>
<div class="a" style="left:799px;top:757px;width:0;height:0;border-left:4.0px solid transparent;border-right:4.0px solid transparent;border-top:6.5px solid #999"></div>
<div class="a" style="left:815px;top:752px;width:1px;height:16px;background:#444;"></div>
<svg class="a" style="left:826px;top:755px" width="16" height="11" viewBox="0 0 16 11"><path d="M.5 5.5C2.5 2 5 .5 8 .5s5.5 1.5 7.5 5c-2 3.5-4.5 5-7.5 5s-5.5-1.5-7.5-5z" fill="#8a8a8a"/><circle cx="8" cy="5.5" r="3" fill="#292a2d"/><circle cx="8" cy="5.5" r="1.7" fill="#8a8a8a"/></svg>
<div class="a" style="left:852px;top:752px;width:1px;height:16px;background:#444;"></div>
<div class="a" style="left:859px;top:750px;width:248px;height:22px;background:#242424;border:1px solid #4a4a4a"></div>
<div class="a" style="left:863.8px;top:753.7px;font-size:12.6px;line-height:16px;color:#e8eaed;font-weight:400;letter-spacing:-0.220px;">Filter</div>
<div class="a" style="left:1115.3px;top:753.5px;font-size:12.6px;line-height:16px;color:#e8eaed;font-weight:400;letter-spacing:-0.339px;">Default levels</div>
<div class="a" style="left:1191px;top:757px;width:0;height:0;border-left:3.5px solid transparent;border-right:3.5px solid transparent;border-top:6.5px solid #999"></div>
<div class="a" style="left:1718px;top:756px;width:1px;height:13px;background:#444;"></div>
<div class="a" style="left:1728.0px;top:752.5px;font-size:12.6px;line-height:16px;color:#9aa0a6;font-weight:400;letter-spacing:-0.175px;">5 hidden</div>
<svg class="a" style="left:1787px;top:753px" width="15" height="15" viewBox="0 0 24 24"><path fill="#9a9a9a" d="M19.14 12.94c.04-.3.06-.61.06-.94 0-.32-.02-.64-.07-.94l2.03-1.58a.49.49 0 0 0 .12-.61l-1.920-3.32a.488.488 0 0 0-.59-.22l-2.39.96c-.5-.38-1.03-.7-1.62-.94l-.36-2.54a.484.484 0 0 0-.48-.41h-3.84c-.24 0-.43.17-.47.41l-.36 2.54c-.59.24-1.13.57-1.62.94l-2.39-.96c-.22-.08-.47 0-.59.22L2.74 8.87c-.12.21-.08.47.12.61l2.03 1.58c-.05.3-.09.63-.09.94s.02.64.07.94l-2.03 1.58a.49.49 0 0 0-.12.61l1.92 3.32c.12.22.37.29.59.22l2.39-.96c.5.38 1.03.7 1.62.94l.36 2.54c.05.24.24.41.48.41h3.84c.24 0 .44-.17.47-.41l.36-2.540c.59-.24 1.13-.56 1.62-.94l2.39.96c.22.08.47 0 .59-.22l1.92-3.32c.12-.22.07-.47-.12-.61l-2.01-1.58zM12 15.6c-1.98 0-3.6-1.62-3.6-3.6s1.62-3.6 3.6-3.6 3.6 1.62 3.6 3.6-1.62 3.6-3.6 3.6z"/></svg>
<div class="a" style="left:1644.3px;top:737.1px;font-size:20px;line-height:25px;color:rgba(225,225,225,.85);font-weight:400;letter-spacing:-1.000px;">CSDN @北乎下周</div></body></html>
